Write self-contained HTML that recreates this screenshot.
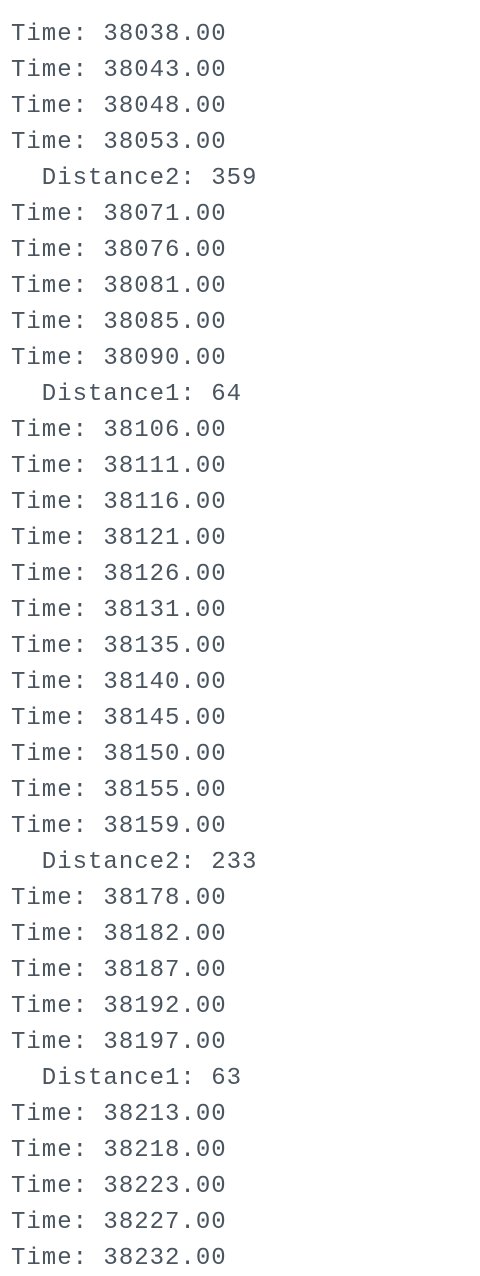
<!DOCTYPE html>
<html><head><style>
html,body{margin:0;padding:0;background:#fff;width:480px;height:1276px;overflow:hidden}
pre{margin:0;padding:17px 0 0 11px;font-family:"Liberation Mono",monospace;font-size:24px;letter-spacing:1px;line-height:36px;color:#4a5560}
</style></head><body><pre>Time: 38038.00
Time: 38043.00
Time: 38048.00
Time: 38053.00
  Distance2: 359
Time: 38071.00
Time: 38076.00
Time: 38081.00
Time: 38085.00
Time: 38090.00
  Distance1: 64
Time: 38106.00
Time: 38111.00
Time: 38116.00
Time: 38121.00
Time: 38126.00
Time: 38131.00
Time: 38135.00
Time: 38140.00
Time: 38145.00
Time: 38150.00
Time: 38155.00
Time: 38159.00
  Distance2: 233
Time: 38178.00
Time: 38182.00
Time: 38187.00
Time: 38192.00
Time: 38197.00
  Distance1: 63
Time: 38213.00
Time: 38218.00
Time: 38223.00
Time: 38227.00
Time: 38232.00</pre></body></html>
